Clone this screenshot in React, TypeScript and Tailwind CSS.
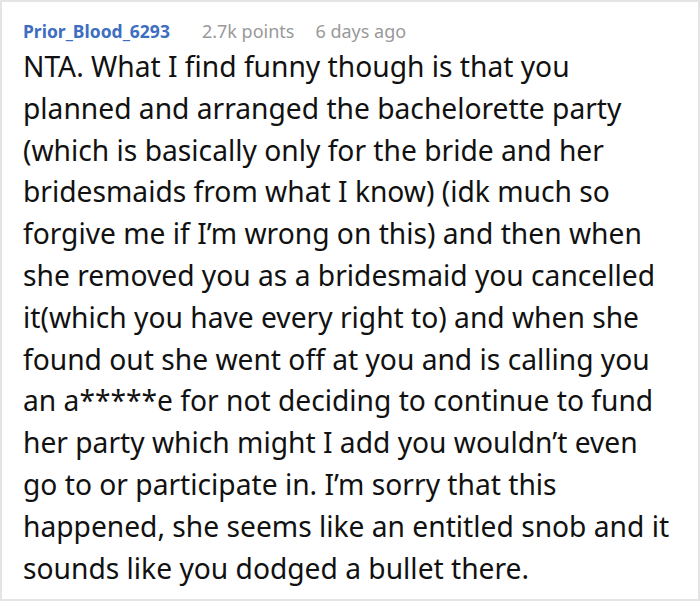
export default function App() {
  return (
    <div className="w-[700px] h-[601px] bg-white border-2 border-[#e4e4e4] box-border px-[21px] pt-[16px] font-['Noto_Sans',sans-serif]">
      <div className="flex items-baseline text-[#999999] text-[18px] leading-[26px]">
        <span className="font-bold text-[17.5px] text-[#3d6ebf]">Prior_Blood_6293</span>
        <span className="ml-[32px]">2.7k points</span>
        <span className="ml-[21px]">6 days ago</span>
      </div>
      <p className="mt-[2px] text-[28.2px] leading-[41.8px] text-[#111111]">
        NTA. What I find funny though is that you planned and arranged the bachelorette party (which is basically only
        for the bride and her bridesmaids from what I know) (idk much so forgive me if I’m wrong on this) and then when
        she removed you as a bridesmaid you cancelled it(which you have every right to) and when she found out she went
        off at you and is calling you an a*****e for not deciding to continue to fund her party which might I add you
        wouldn’t even go to or participate in. I’m sorry that this happened, she seems like an entitled snob and it
        sounds like you dodged a bullet there.
      </p>
    </div>
  );
}
